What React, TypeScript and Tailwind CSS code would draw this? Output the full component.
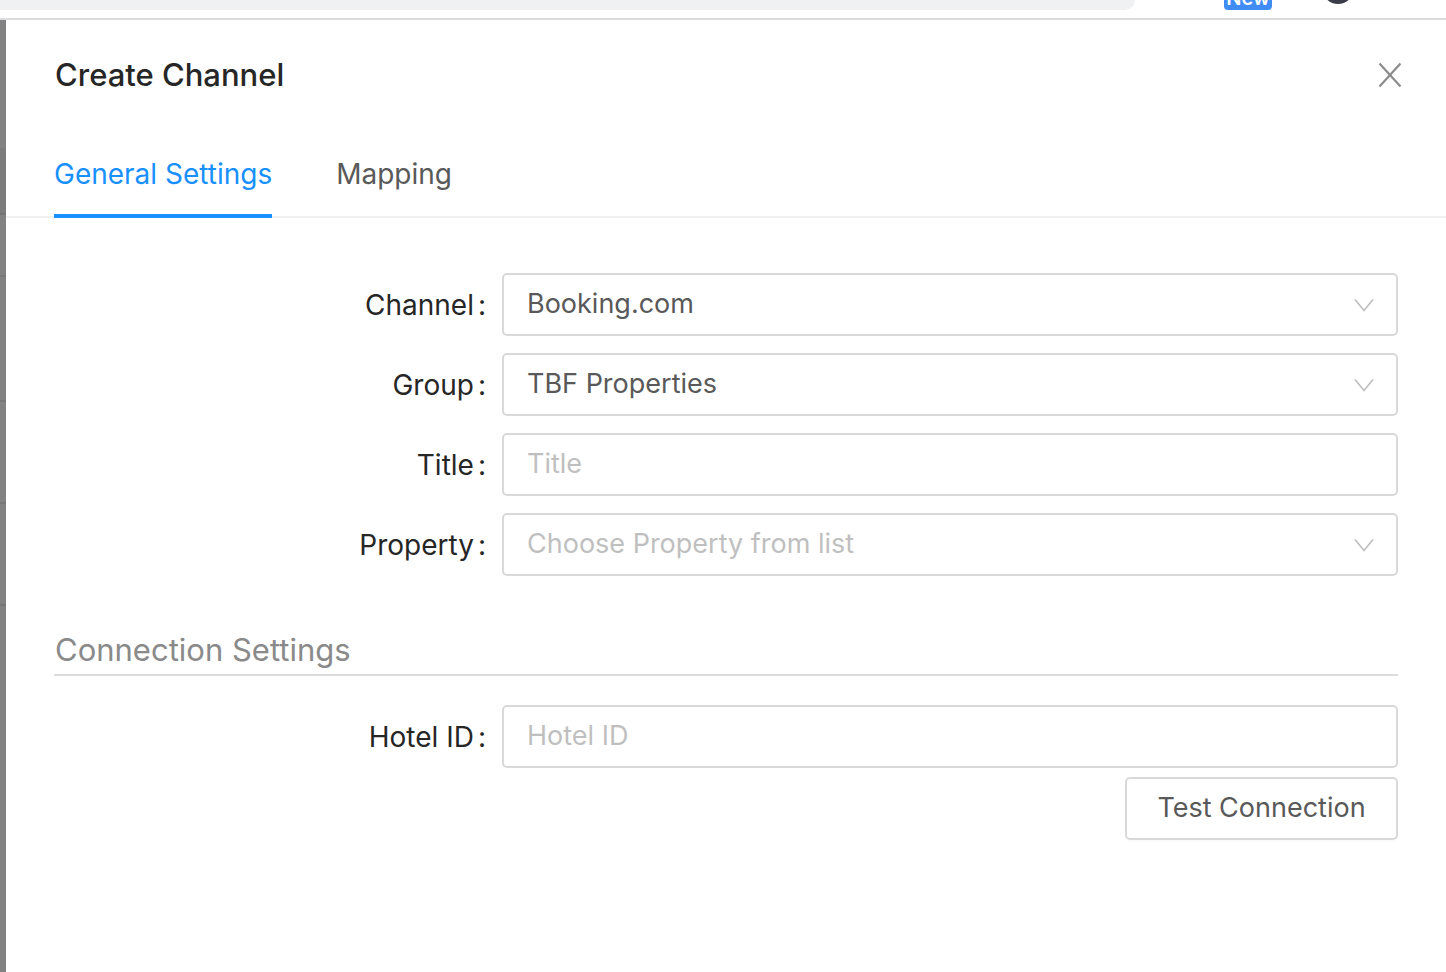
import React from "react";

const ChevronDown = () => (
  <svg width="20" height="14" viewBox="0 0 20 14" fill="none">
    <polyline points="1,1.5 10,12.5 19,1.5" stroke="#bfbfbf" strokeWidth="1.6" strokeLinejoin="miter" />
  </svg>
);

const CloseIcon = () => (
  <svg width="24" height="26" viewBox="0 0 24 26" fill="none">
    <line x1="1.5" y1="1.5" x2="22.5" y2="24.5" stroke="#8c8c8c" strokeWidth="2.2" />
    <line x1="22.5" y1="1.5" x2="1.5" y2="24.5" stroke="#8c8c8c" strokeWidth="2.2" />
  </svg>
);

const FormRow = ({
  label,
  value,
  placeholder,
  select,
}: {
  label: string;
  value?: string;
  placeholder?: string;
  select?: boolean;
}) => {
  return (
    <div className="flex flex-row items-center">
      <div className="w-[448px] flex justify-end items-center pr-[16px] text-[28px] text-[#262626]">
        <span>{label}</span>
        <span className="ml-[4px]">:</span>
      </div>
      <div className="flex-1 h-[63px] border-2 border-[#d9d9d9] rounded-[5px] flex items-center pl-[23px] pr-[22px] text-[27px]">
        {value ? (
          <span className="grow text-[#595959]">{value}</span>
        ) : (
          <span className="grow text-[#bfbfbf]">{placeholder}</span>
        )}
        {select && <ChevronDown />}
      </div>
    </div>
  );
};

const App = () => {
  return (
    <div className="w-[1446px] h-[972px] bg-white flex flex-col overflow-hidden font-['Inter',sans-serif]">
      {/* top app bar, mostly cut off */}
      <div className="h-[18px] flex flex-row items-start">
        <div className="w-[1135px] h-[10px] bg-[#f0f1f3] rounded-br-[14px]"></div>
        <div className="ml-[89px] w-[48px] h-[28px] mt-[-18px] bg-[#3f8cf4] rounded-[4px] flex items-end justify-center pb-[1px] text-white text-[20px] font-semibold leading-[22px]">
          New
        </div>
        <div className="ml-[50px] w-[32px] h-[32px] mt-[-28px] rounded-full bg-[#3a3d48]"></div>
      </div>
      <div className="h-[2px] bg-[#dcdbe0]"></div>

      <div className="flex-1 flex flex-row">
        {/* dimmed page behind */}
        <div className="w-[6px] flex flex-col bg-[#828282]">
          <div className="h-[128px]"></div>
          <div className="h-[65px] bg-[#7c7c7c]"></div>
          <div className="h-[2px] bg-[#747474]"></div>
          <div className="h-[60px]"></div>
          <div className="h-[2px] bg-[#777777]"></div>
          <div className="h-[123px]"></div>
          <div className="h-[2px] bg-[#777777]"></div>
          <div className="h-[100px]"></div>
          <div className="h-[2px] bg-[#777777]"></div>
          <div className="h-[100px]"></div>
          <div className="h-[2px] bg-[#777777]"></div>
        </div>

        {/* modal */}
        <div className="flex-1 bg-white flex flex-col">
          <div className="flex flex-row items-start justify-between pl-[49px] pr-[44px] pt-[32px] h-[100px]">
            <h1 className="text-[31px] leading-[45px] font-medium text-[#262626]">Create Channel</h1>
            <div className="mt-[10px]">
              <CloseIcon />
            </div>
          </div>

          <div className="flex flex-row items-end border-b-2 border-[#f0f0f0] pl-[48px] h-[98px]">
            <div className="border-b-4 border-[#1890ff] mb-[-2px] pb-[20px] text-[28px] leading-[40px] text-[#1890ff]">
              General Settings
            </div>
            <div className="ml-[64px] mb-[-2px] border-b-4 border-transparent pb-[20px] text-[28px] leading-[40px] text-[#595959]">
              Mapping
            </div>
          </div>

          <div className="flex flex-col pl-[48px] pr-[48px] pt-[55px]">
            <div className="flex flex-col gap-[17px]">
              <FormRow label="Channel" value="Booking.com" select />
              <FormRow label="Group" value="TBF Properties" select />
              <FormRow label="Title" placeholder="Title" />
              <FormRow label="Property" placeholder="Choose Property from list" select />
            </div>

            <div className="mt-[54px] pb-[4px] border-b-2 border-[#dcdcdc] text-[31px] leading-[40px] text-[#8a8a8a] pl-[1px]">
              Connection Settings
            </div>

            <div className="mt-[29px] flex flex-col">
              <FormRow label="Hotel ID" placeholder="Hotel ID" />
              <div className="flex justify-end mt-[9px]">
                <button className="w-[273px] h-[63px] border-2 border-[#d9d9d9] rounded-[5px] bg-white shadow-[0_2px_0_rgba(0,0,0,0.015)] text-[27px] text-[#595959]">
                  Test Connection
                </button>
              </div>
            </div>
          </div>
        </div>
      </div>
    </div>
  );
};

export default App;
